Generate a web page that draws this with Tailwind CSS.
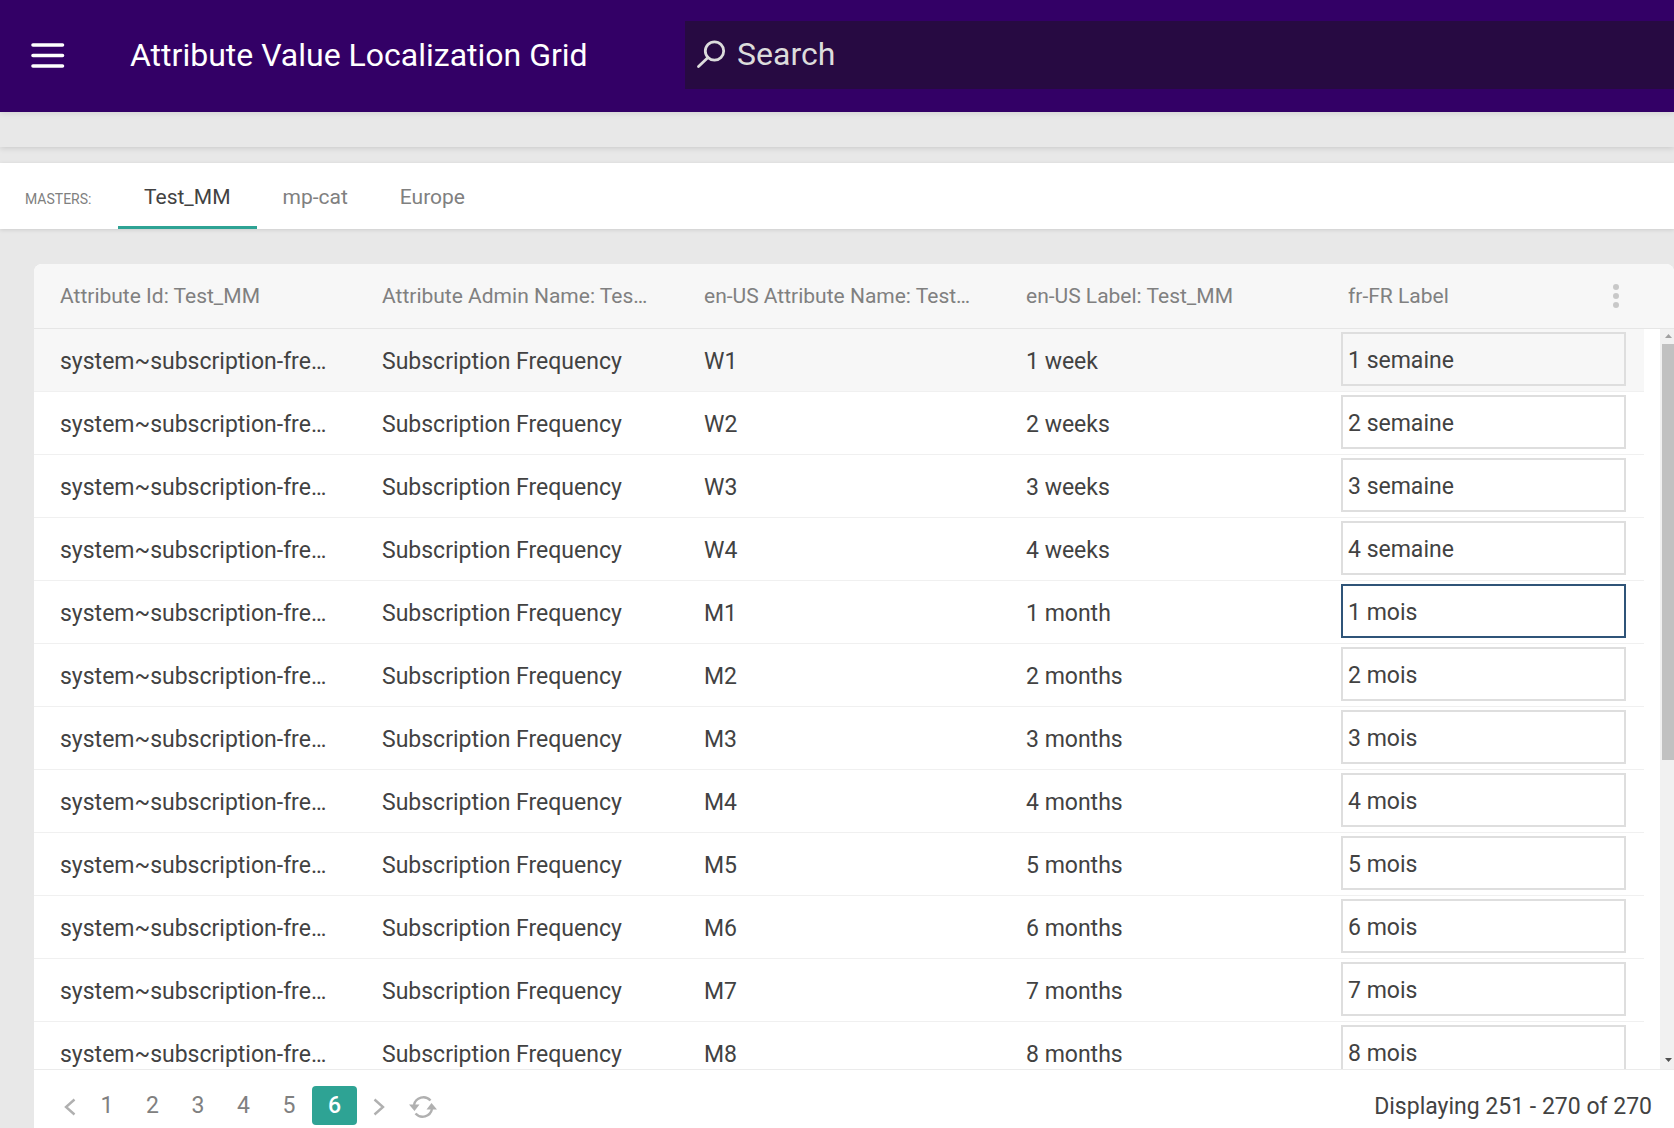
<!DOCTYPE html>
<html lang="en">

<head>
  <meta charset="UTF-8" />
  <meta name="viewport" content="width=device-width, initial-scale=1.0" />
  <title>Attribute Value Localization Grid</title>
  <script src="https://cdn.jsdelivr.net/npm/@tailwindcss/browser@4"></script>
</head>

<body class="h-screen flex flex-col overflow-hidden bg-[#e8e8e8] font-['Roboto',sans-serif] text-[#424242]">
  <!-- Top bar -->
  <header class="relative z-10 h-28 shrink-0 flex items-center bg-[#330066] shadow-[0_1px_6px_rgba(0,0,0,0.1)]">
    <button type="button" aria-label="Menu" class="ml-6 w-12 h-12 flex justify-center items-center">
      <svg class="w-[34px] h-8" viewBox="0 0 34 32" fill="none" stroke="#fff" stroke-width="3.6" stroke-linecap="round">
        <path d="M2 5h29.500M2 15.500h29.500M2 26h29.500" />
      </svg>
    </button>
    <h1 class="ml-[58px] mb-[2px] w-[555px] shrink-0 text-[32px] leading-10 text-white whitespace-nowrap">Attribute Value Localization Grid</h1>
    <label class="flex-1 h-17 mb-[2px] flex items-center bg-[#270a42] text-[#dcdcdc]">
      <svg class="ml-[11px] w-[30px] h-[30px]" viewBox="0 0 30 30" fill="none" stroke="#dcdcdc" stroke-width="2.8" stroke-linecap="round">
        <circle cx="18.5" cy="11" r="9.2" />
        <path d="M12 17.500 2.500 26.500" />
      </svg>
      <input type="search" placeholder="Search" class="ml-[11px] mb-[2px] flex-1 text-[32px] leading-10 outline-none placeholder:text-[#dcdcdc]" />
    </label>
  </header>

  <div class="h-[35px] shrink-0 shadow-[0_1px_6px_rgba(0,0,0,0.14)]"></div>

  <!-- Masters tabs -->
  <nav class="relative mt-4 h-[66px] shrink-0 flex bg-white shadow-[0_1px_4px_rgba(0,0,0,0.12)] text-[21px] leading-7 text-[#808080]">
    <span class="w-[118px] pl-[25px] pt-6 text-sm leading-6">MASTERS:</span>
    <a href="#" class="px-[26px] pt-5 border-b-3 border-[#2ea394] text-[#424242]">Test_MM</a>
    <a href="#" class="px-[26px] pt-5">mp-cat</a>
    <a href="#" class="px-[26px] pt-5">Europe</a>
  </nav>

  <!-- Grid -->
  <main class="mt-[35px] ml-[34px] flex-1 min-h-0 flex flex-col rounded-t-lg overflow-hidden bg-white">
    <div class="flex-1 min-h-0 flex flex-col">
      <div class="pr-[30px] bg-[#f7f7f7] border-b border-[#e6e6e6]">
        <table class="w-full table-fixed text-left text-[21px] leading-7 text-[#808080]">
          <thead>
            <tr class="h-16">
              <th class="px-[26px] font-normal truncate">Attribute Id: Test_MM</th>
              <th class="px-[26px] font-normal truncate">Attribute Admin Name: Test_MM</th>
              <th class="px-[26px] font-normal truncate">en-US Attribute Name: Test_MM</th>
              <th class="px-[26px] font-normal truncate">en-US Label: Test_MM</th>
              <th class="pl-[26px] pr-5 font-normal">
                <div class="flex justify-between items-center">
                  <span id="label-col">fr-FR Label</span>
                  <button type="button" aria-label="Column menu">
                    <svg class="w-4 h-6" viewBox="0 0 16 24" fill="#c8c8c8">
                      <circle cx="8" cy="3" r="3" />
                      <circle cx="8" cy="12" r="3" />
                      <circle cx="8" cy="21" r="3" />
                    </svg>
                  </button>
                </div>
              </th>
            </tr>
          </thead>
        </table>
      </div>

      <div class="flex-1 min-h-0 flex overflow-hidden">
        <div class="flex-1 mr-4">
          <table class="w-full table-fixed border-separate border-spacing-0 text-[23px] leading-7">
            <tbody id="rows"></tbody>
          </table>
        </div>
        <!-- Scroll track -->
        <div class="w-[14px] pl-[2px] flex flex-col bg-[#f1f1f1]">
          <svg class="w-3 h-[15px] shrink-0" viewBox="0 0 12 15" fill="#a0a0a0">
            <path d="M3 9h7L6.500 5z" />
          </svg>
          <div class="flex-1 min-h-0">
            <div class="h-[58.6%] bg-[#c1c1c1]"></div>
          </div>
          <svg class="w-3 h-[15px] shrink-0" viewBox="0 0 12 15" fill="#505050">
            <path d="M3 4h7L6.500 8z" />
          </svg>
        </div>
      </div>
    </div>

    <!-- Pager -->
    <footer class="h-[59px] shrink-0 px-[22px] flex items-center justify-between border-t border-[#ebebeb] text-[23px] leading-7">
      <div class="h-[39px] mt-3 flex items-center text-[#808080]">
        <button type="button" aria-label="Previous page" class="w-[28px] pt-1 flex justify-center">
          <svg class="w-3 h-[18px]" viewBox="0 0 12 18" fill="none" stroke="#b0b0b0" stroke-width="2.400">
            <path d="M10.500 1.500 2 9l8.500 7.500" />
          </svg>
        </button>
        <button type="button" class="w-[46px] pt-[2px]">1</button>
        <button type="button" class="w-[45px] pt-[2px]">2</button>
        <button type="button" class="w-[46px] pt-[2px]">3</button>
        <button type="button" class="w-[45px] pt-[2px]">4</button>
        <button type="button" class="w-[46px] pt-[2px]">5</button>
        <button type="button" class="w-[45px] h-[39px] pt-[2px] rounded-sm bg-[#2ea394] text-white font-medium">6</button>
        <button type="button" aria-label="Next page" class="w-[44px] pt-1 flex justify-center">
          <svg class="w-3 h-[18px]" viewBox="0 0 12 18" fill="none" stroke="#b0b0b0" stroke-width="2.400">
            <path d="M1.500 1.500 10 9l-8.500 7.500" />
          </svg>
        </button>
        <button type="button" aria-label="Refresh" class="w-[44px] pt-1 flex justify-center">
          <svg class="w-7 h-6" viewBox="0 0 28 24" fill="none" stroke="#b0b0b0" stroke-width="2.400">
            <path d="M5 10A9.600 9.600 0 0 1 21.500 5.500M23 14A9.600 9.600 0 0 1 6.500 18.500" />
            <path d="M0 9.500h10.500L5.500 16zM28 14.500H17.500L22.500 8z" fill="#b0b0b0" stroke="none" />
          </svg>
        </button>
      </div>
      <p class="mt-4">Displaying 251 - 270 of 270</p>
    </footer>
  </main>

  <script>
    const rows = [
      ['W1', '1 week', '1 semaine'],
      ['W2', '2 weeks', '2 semaine'],
      ['W3', '3 weeks', '3 semaine'],
      ['W4', '4 weeks', '4 semaine'],
      ['M1', '1 month', '1 mois'],
      ['M2', '2 months', '2 mois'],
      ['M3', '3 months', '3 mois'],
      ['M4', '4 months', '4 mois'],
      ['M5', '5 months', '5 mois'],
      ['M6', '6 months', '6 mois'],
      ['M7', '7 months', '7 mois'],
      ['M8', '8 months', '8 mois']
    ];
    const active = 'M1';

    document.getElementById('rows').innerHTML = rows.map(([name, label, value], i) => `
      <tr class="h-[63px] ${i == 0 ? 'bg-[#f7f7f7]' : ''}">
        <td class="px-[26px] pt-1 border-b border-[#f0f0f0] truncate">system~subscription-frequency</td>
        <td class="px-[26px] pt-1 border-b border-[#f0f0f0] truncate">Subscription Frequency</td>
        <td class="px-[26px] pt-1 border-b border-[#f0f0f0] truncate">${name}</td>
        <td class="px-[26px] pt-1 border-b border-[#f0f0f0] truncate">${label}</td>
        <td class="pl-[19px] pr-[18px] pt-[3px] pb-[5px] border-b border-[#f0f0f0]">
          <input type="text" value="${value}" aria-labelledby="label-col"
            class="block w-full h-[54px] px-[5px] pt-[2px] border-2 outline-none ${name == active ? 'border-[#2f5478]' : 'border-[#dedede]'}" />
        </td>
      </tr>`).join('');
  </script>
</body>

</html>
